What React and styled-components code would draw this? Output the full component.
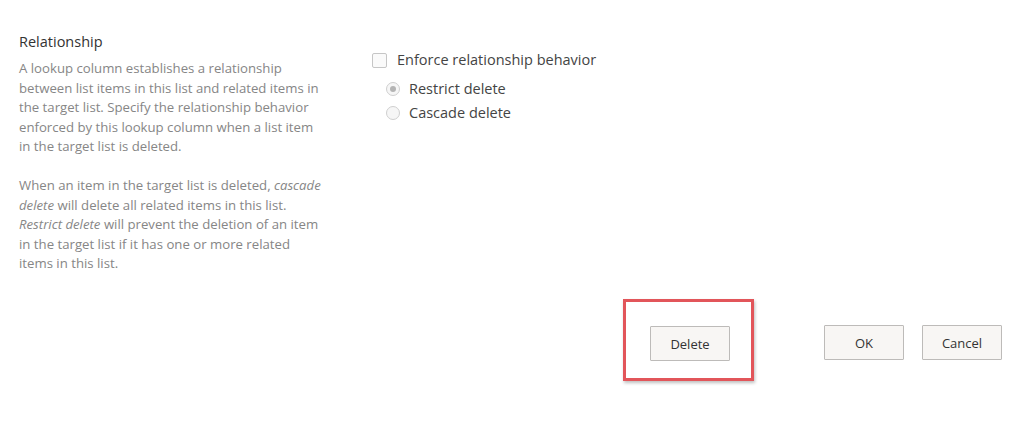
import React from "react";
import styled, { createGlobalStyle } from "styled-components";

const GlobalStyle = createGlobalStyle`
	html, body {
		margin: 0;
		padding: 0;
		background: #ffffff;
	}
	body {
		font-family: "Open Sans", "Noto Sans", sans-serif;
	}
`;

const Page = styled.div`
	width: 1024px;
	height: 432px;
	overflow: hidden;
	display: flex;
	flex-direction: column;
`;

const Section = styled.section`
	display: grid;
	grid-template-columns: 306px 1fr;
	column-gap: 47px;
	padding: 32px 0 0 19px;
`;

const Info = styled.div`
	display: flex;
	flex-direction: column;
`;

const Heading = styled.h3`
	margin: 0 0 7px;
	font-size: 14.5px;
	font-weight: 400;
	line-height: 20px;
	color: #333333;
`;

const Description = styled.p`
	margin: 0 0 19.5px;
	font-size: 13.2px;
	line-height: 19.5px;
	color: #868686;
`;

const Options = styled.div`
	display: flex;
	flex-direction: column;
	padding-top: 18px;
`;

const CheckRow = styled.label`
	display: flex;
	align-items: center;
	gap: 10px;
	font-size: 14.5px;
	line-height: 20px;
	color: #444444;
`;

const Box = styled.span`
	width: 13px;
	height: 13px;
	border: 1px solid #c6c6c6;
	border-radius: 2px;
	background: #fafafa;
`;

const RadioList = styled.div`
	display: flex;
	flex-direction: column;
	gap: 4px;
	padding: 9px 0 0 14px;
`;

const RadioRow = styled.label`
	display: flex;
	align-items: center;
	gap: 9px;
	font-size: 14.5px;
	line-height: 20px;
	color: #444444;
`;

const Dot = styled.span`
	width: 12px;
	height: 12px;
	border: 1px solid #cfcfcf;
	border-radius: 50%;
	background: #f6f6f6;
	display: flex;
	align-items: center;
	justify-content: center;

	&::after {
		content: "";
		width: 6px;
		height: 6px;
		border-radius: 50%;
		background: ${(p) => (p.$checked ? "#b4b4b4" : "transparent")};
	}
`;

const Footer = styled.div`
	display: flex;
	justify-content: flex-end;
	align-items: flex-start;
	padding: 6px 22px 0 0;
`;

const Highlight = styled.div`
	border: 3px solid #e2555a;
	box-shadow: 1px 2px 3px rgba(0, 0, 0, 0.25);
	padding: 24px 21px 17px 24px;
	margin-right: 70px;
`;

const Button = styled.button`
	width: 80px;
	height: 35px;
	margin-top: ${(p) => p.$offset || 0}px;
	margin-left: ${(p) => p.$gap || 0}px;
	border: 1px solid #bdbbb9;
	border-radius: 1px;
	background: #f8f6f4;
	font-family: "Open Sans", "Noto Sans", sans-serif;
	font-size: 13px;
	color: #333333;
	padding: 0;
`;

const App = () => {
	return (
		<>
			<GlobalStyle />
			<Page>
				<Section>
					<Info>
						<Heading>Relationship</Heading>
						<Description>
							A lookup column establishes a relationship between list items in
							this list and related items in the target list. Specify the
							relationship behavior enforced by this lookup column when a list
							item in the target list is deleted.
						</Description>
						<Description>
							When an item in the target list is deleted, <i>cascade delete</i>{" "}
							will delete all related items in this list. <i>Restrict delete</i>{" "}
							will prevent the deletion of an item in the target list if it has
							one or more related items in this list.
						</Description>
					</Info>
					<Options>
						<CheckRow>
							<Box />
							Enforce relationship behavior
						</CheckRow>
						<RadioList>
							<RadioRow>
								<Dot $checked />
								Restrict delete
							</RadioRow>
							<RadioRow>
								<Dot />
								Cascade delete
							</RadioRow>
						</RadioList>
					</Options>
				</Section>
				<Footer>
					<Highlight>
						<Button>Delete</Button>
					</Highlight>
					<Button $offset={26}>OK</Button>
					<Button $offset={26} $gap={18}>
						Cancel
					</Button>
				</Footer>
			</Page>
		</>
	);
};

export default App;
